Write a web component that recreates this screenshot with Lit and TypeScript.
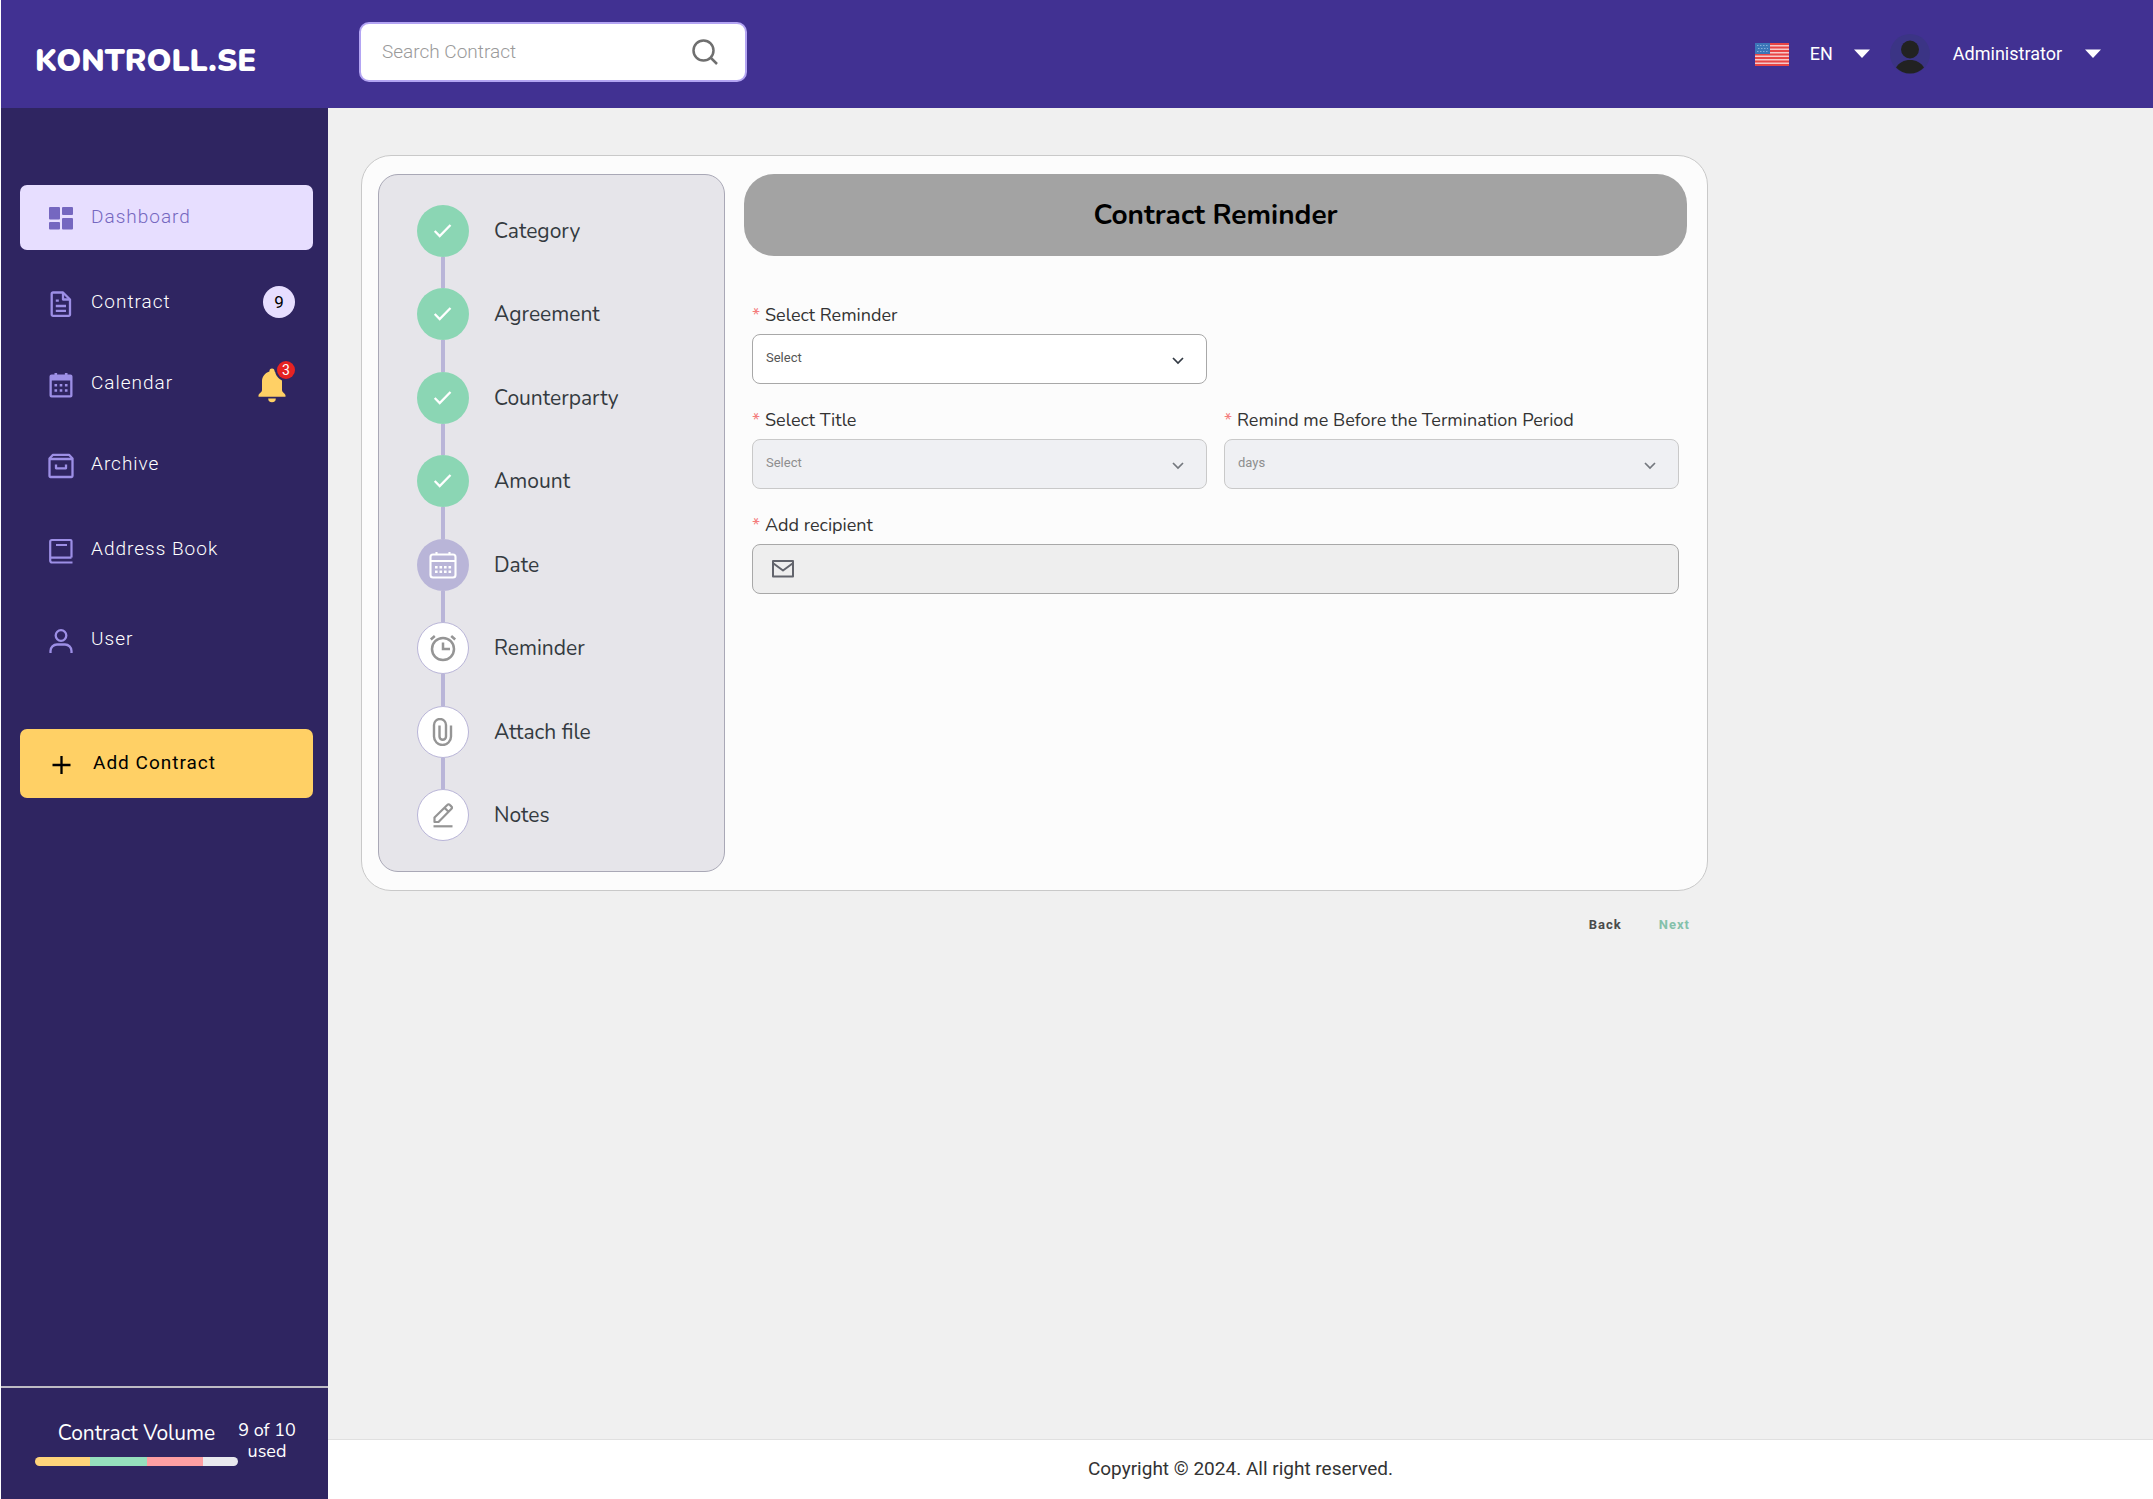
import { LitElement, html, css, svg, nothing, type TemplateResult } from "lit";
import { customElement, property } from "lit/decorators.js";
import { classMap } from "lit/directives/class-map.js";

type Icon = TemplateResult;

const icons: Record<string, Icon> = {
  dashboard: svg`<g fill="currentColor"><rect x="0" y="0" width="11" height="12.500" rx="1"/><rect x="13" y="0" width="11" height="8" rx="1"/><rect x="0" y="15" width="11" height="7.500" rx="1"/><rect x="13" y="11" width="11" height="11.500" rx="1"/></g>`,
  contract: svg`<g fill="none" stroke="currentColor" stroke-width="2.300" stroke-linejoin="round"><path d="M4 0.500H14L21 7.500V22.500a1.300 1.300 0 0 1-1.300 1.300H4a1.300 1.300 0 0 1-1.300-1.300V1.800A1.300 1.300 0 0 1 4 .5Z"/><path d="M14 1v6.500h6.500M6.800 14h10.200M6.800 18.800h10.200M6.800 8.700h3"/></g>`,
  calendar: svg`<g fill="currentColor"><path fill-rule="evenodd" d="M5.500 0h2.600v1.500h7.800V0h2.600v1.500H21.500A2 2 0 0 1 23.500 3.500V22.500A2 2 0 0 1 21.500 24.500H2.500A2 2 0 0 1 .500 22.500V3.500A2 2 0 0 1 2.500 1.500H5.500ZM2.800 7.500V22.300H21.200V7.500Z"/><path d="M5.500 11h2.600v2.600H5.500zM10.700 11h2.600v2.600h-2.600zM15.900 11h2.600v2.600h-2.600zM5.500 16.200h2.600v2.600H5.500zM10.700 16.200h2.600v2.600h-2.600zM15.900 16.200h2.600v2.600h-2.600z"/></g>`,
  archive: svg`<g fill="none" stroke="currentColor" stroke-width="2.300" stroke-linejoin="round"><path d="M.500 4.500 4 .800h16l3.500 3.700V22a1 1 0 0 1-1 1H1.500a1 1 0 0 1-1-1Z"/><path d="M.500 5h23M7 10.500v3.800h10v-3.800"/></g>`,
  book: svg`<g fill="none" stroke="currentColor" stroke-width="2.200"><path d="M22.500 18.500V2a1 1 0 0 0-1-1H3A1.800 1.800 0 0 0 1.200 3V21.500a2 2 0 0 0 2 2H23.500M1.500 18.600H22.500M7 6H18"/></g>`,
  user: svg`<g fill="none" stroke="currentColor" stroke-width="2.300"><circle cx="12" cy="6.500" r="5.300"/><path d="M1.500 24V22a6.500 6.500 0 0 1 6.500-6.500h8a6.500 6.500 0 0 1 6.500 6.500V24"/></g>`,
  plus: svg`<path d="M13.500 4v18M4.500 13h18" fill="none" stroke="currentColor" stroke-width="2.300"/>`,
  check: svg`<path d="m5.700 14 5 5L21.500 8" fill="none" stroke="currentColor" stroke-width="2.300"/>`,
  date: svg`<g fill="none" stroke="currentColor" stroke-width="2.100"><rect x="1.500" y="3.500" width="25" height="23" rx="2.500"/><path d="M1.500 10H26.500M7.500 1v3M20.500 1v3"/></g><path fill="currentColor" d="M6 15h2.600v2.600H6zM10.500 15h2.600v2.600h-2.600zM15 15h2.600v2.600H15zM19.500 15h2.600v2.600h-2.600zM6 19.500h2.600v2.600H6zM10.500 19.500h2.600v2.600h-2.600zM15 19.500h2.600v2.600H15zM19.500 19.500h2.600v2.600h-2.600z"/>`,
  alarm: svg`<g fill="none" stroke="currentColor" stroke-width="2.500"><circle cx="14" cy="15" r="11"/><path d="M14 8.500V15h7"/><path d="m1.800 5.500 4-3.500M26.200 5.500l-4-3.500"/></g>`,
  clip: svg`<path d="M22 7.500V18.500a8.300 8.300 0 0 1-17 0V7a5.600 5.600 0 0 1 12 0V18.500a3.100 3.100 0 0 1-6.500 0V7.500" fill="none" stroke="currentColor" stroke-width="2.400"/>`,
  pen: svg`<g fill="none" stroke="currentColor" stroke-width="2.200" stroke-linejoin="round"><path d="M5.500 21v-4.500L18.500 3.800a1.500 1.500 0 0 1 2.200 0l1.800 1.800a1.500 1.500 0 0 1 0 2.200L9.500 21ZM15.500 6.800l4 4"/><path d="M4.500 25.300H23.500"/></g>`,
};

const drawIcon = (name: string, size: number) =>
  html`<svg class="icon" width=${size} height=${size} viewBox="0 0 ${size} ${size}" aria-hidden="true">${icons[name]}</svg>`;

const caret = html`<svg width="16" height="10" viewBox="0 0 16 10" aria-hidden="true"><path d="M0 .500h16L8 9Z" fill="#fff"/></svg>`;

@customElement("top-bar")
class TopBar extends LitElement {
  static styles = css`
    :host { display: flex; align-items: center; height: 108px; background: #413192; color: #fff; font-family: Roboto, sans-serif; }
    .brand { box-sizing: border-box; width: 327px; flex: none; padding: 14px 0 0 34px; font: 900 31px/40px Nunito, Lato, sans-serif; color: #fff; text-decoration: none; }
    .search { box-sizing: border-box; display: flex; align-items: center; width: 388px; height: 60px; margin: 0 0 5px 31px; padding: 0 27px 0 21px; background: #fff; border: 2px solid #b3a4f3; border-radius: 10px; }
    .search input { flex: 1; min-width: 0; padding: 1px 0 0; border: 0; outline: 0; background: none; font: 300 19px/24px Roboto, sans-serif; color: #333; }
    .search input::placeholder { color: #9a9a9a; opacity: 1; }
    .search button { display: grid; padding: 0; border: 0; background: none; }
    .account { display: flex; align-items: center; gap: 20px; margin: 0 52px 0 auto; }
    .pick { display: flex; align-items: center; gap: 21px; padding: 0; border: 0; background: none; color: #fff; font: 400 18px/24px Roboto, sans-serif; }
    .pick svg { display: block; }
    .profile { gap: 23px; }
  `;
  render() {
    return html`
      <a class="brand" href="#">KONTROLL.SE</a>
      <form class="search" role="search">
        <input type="search" aria-label="Search Contract" placeholder="Search Contract" />
        <button type="button" aria-label="Search">
          <svg width="26" height="26" viewBox="0 0 26 26" fill="none" stroke="#6f6f6f" stroke-width="2.500"><circle cx="11.500" cy="11.500" r="10"/><path d="m19 19 6 6"/></svg>
        </button>
      </form>
      <div class="account">
        <button class="pick" type="button">
          <svg width="34" height="23" viewBox="0 0 34 23" aria-hidden="true">
            <rect width="34" height="23" fill="#f6c9c9"/>
            <path d="M0 1H34M0 4.500H34M0 8H34M0 11.500H34M0 15H34M0 18.500H34M0 22H34" stroke="#e84545" stroke-width="1.900"/>
            <rect width="15" height="11" fill="#3b76b8"/>
            <path d="M2 2.500H14M3 5.500H13M2 8.500H14" stroke="#86add8" stroke-width="1" stroke-dasharray="1.500 1.500"/>
          </svg>
          <span>EN</span>${caret}
        </button>
        <button class="pick profile" type="button">
          <svg width="40" height="40" viewBox="0 0 40 40" aria-hidden="true">
            <circle cx="20" cy="20" r="20" fill="#3b3485"/><circle cx="20" cy="15.500" r="9" fill="#222"/>
            <path d="M6 33.500C9 28.500 14 26 20 26s11 2.500 14 7.500A19.500 19.500 0 0 1 6 33.500Z" fill="#222"/>
          </svg>
          <span>Administrator</span>${caret}
        </button>
      </div>`;
  }
}

interface NavItem { label: string; icon: string; size: number; active?: boolean; space?: "wide" | "wider"; count?: number; alerts?: number; }

const navItems: NavItem[] = [
  { label: "Dashboard", icon: "dashboard", size: 24, active: true },
  { label: "Contract", icon: "contract", size: 24, count: 9, space: "wide" },
  { label: "Calendar", icon: "calendar", size: 24, alerts: 3 },
  { label: "Archive", icon: "archive", size: 24 },
  { label: "Address Book", icon: "book", size: 24, space: "wide" },
  { label: "User", icon: "user", size: 24, space: "wider" },
];

const volume = [
  { color: "#ffd47a", share: 27 },
  { color: "#96e0bd", share: 28 },
  { color: "#ff9fa3", share: 28 },
  { color: "#e9e9ee", share: 17 },
];

@customElement("side-bar")
class SideBar extends LitElement {
  static styles = css`
    :host { display: flex; flex-direction: column; background: #2f2561; font-family: Roboto, sans-serif; }
    nav { display: flex; flex-direction: column; gap: 16px; padding: 77px 15px 0 19px; }
    .item { box-sizing: border-box; display: flex; align-items: center; height: 65px; padding: 0 18px 2px 28px; border-radius: 7px; color: #fff; text-decoration: none; font: 300 19px/24px Roboto, sans-serif; letter-spacing: 1px; }
    .item .icon { width: 26px; flex: none; margin: 4px 17px 0 0; color: #9d8fe6; overflow: visible; }
    .label { flex: 1; }
    .active { background: #e7deff; color: #7567c0; }
    .active .icon { color: #7567c0; }
    .wide { margin-top: 4px; }
    .wider { margin-top: 9px; }
    .count { display: grid; place-items: center; width: 32px; height: 32px; border-radius: 50%; background: #e7deff; color: #000; font: 400 17px/20px Roboto, sans-serif; letter-spacing: 0; }
    .bell { position: relative; width: 37px; height: 44px; letter-spacing: 0; }
    .alerts { position: absolute; top: 0; right: 0; width: 18px; height: 18px; border-radius: 50%; background: #e62323; color: #fff; font: 400 14px/18px Roboto, sans-serif; text-align: center; }
    .bell svg { position: absolute; left: 0; top: 7px; }
    .add { width: 100%; height: 69px; margin-top: 41px; border: 0; background: #ffd065; color: #000; font-weight: 400; text-align: left; }
    .add .icon { color: #000; margin-right: 19px; }
    .volume { display: grid; grid-template-columns: 203px auto; justify-content: start; margin-top: auto; padding: 32px 15px 33px 34px; border-top: 2px solid #bdbbc4; color: #fff; font-family: Nunito, Lato, sans-serif; }
    .volume h2 { margin: 0 0 11px; font: 400 21px/26px Nunito, Lato, sans-serif; text-align: center; }
    .used { margin: 0; width: 58px; font-size: 18px; line-height: 21px; text-align: center; }
    .bar { display: flex; height: 9px; border-radius: 5px; overflow: hidden; }
  `;
  render() {
    return html`
      <nav aria-label="Main">
        ${navItems.map((n) => html`
          <a href="#" class=${classMap({ item: true, active: !!n.active, wide: n.space === "wide", wider: n.space === "wider" })}>
            ${drawIcon(n.icon, n.size)}<span class="label">${n.label}</span>
            ${n.count ? html`<span class="count">${n.count}</span>` : nothing}
            ${n.alerts ? html`<span class="bell">
              <svg width="28" height="35" viewBox="0 0 28 35" aria-hidden="true"><path d="M14 .500c1.800 0 2.600 1.300 2.600 3C21.500 5 24 9 24 13.500V22c0 2.500 3.500 3.500 3.500 5.500v1.300H.500V27.500C.500 25.500 4 24.500 4 22V13.500C4 9 6.500 5 11.400 3.500c0-1.700.8-3 2.600-3ZM10.200 30.500h7.600a3.800 3.800 0 0 1-7.600 0Z" fill="#ffd065"/><circle cx="28" cy="2" r="11" fill="#2f2561"/></svg>
              <span class="alerts">${n.alerts}</span></span>` : nothing}
          </a>`)}
        <button class="item add" type="button">${drawIcon("plus", 26)}<span class="label">Add Contract</span></button>
      </nav>
      <section class="volume">
        <div>
          <h2>Contract Volume</h2>
          <div class="bar">${volume.map((v) => html`<span style="width:${v.share}%;background:${v.color}"></span>`)}</div>
        </div>
        <p class="used">9 of 10 used</p>
      </section>`;
  }
}

type StepState = "done" | "current" | "todo";
const steps: { label: string; icon: string; state: StepState }[] = [
  { label: "Category", icon: "check", state: "done" },
  { label: "Agreement", icon: "check", state: "done" },
  { label: "Counterparty", icon: "check", state: "done" },
  { label: "Amount", icon: "check", state: "done" },
  { label: "Date", icon: "date", state: "current" },
  { label: "Reminder", icon: "alarm", state: "todo" },
  { label: "Attach file", icon: "clip", state: "todo" },
  { label: "Notes", icon: "pen", state: "todo" },
];

@customElement("step-list")
class StepList extends LitElement {
  static styles = css`
    :host { box-sizing: border-box; display: block; padding: 14px 38px; background: #e6e5ea; border: 1px solid #a9a8b6; border-radius: 20px; }
    ol { display: grid; grid-auto-rows: 1fr; min-height: 668px; margin: 0; padding: 0; list-style: none; }
    li { display: flex; align-items: center; gap: 25px; font: 400 21px/28px Nunito, Lato, sans-serif; color: #343a40; }
    .track { align-self: stretch; display: flex; flex-direction: column; align-items: center; }
    .track::before, .track::after { content: ""; flex: 1; width: 4px; background: #b9b5d8; }
    li:first-child .track::before, li:last-child .track::after { background: none; }
    .dot { box-sizing: border-box; display: grid; place-items: center; width: 52px; height: 52px; border-radius: 50%; }
    .done { background: #8bd6b4; color: #fff; }
    .current { background: #b9b5d8; color: #fff; }
    .todo { background: #fff; border: 1px solid #b9b5d8; color: #959595; }
  `;
  render() {
    return html`<ol>${steps.map((s) => html`
      <li><span class="track"><span class="dot ${s.state}">${drawIcon(s.icon, 28)}</span></span><span>${s.label}</span></li>`)}</ol>`;
  }
}

@customElement("select-field")
class SelectField extends LitElement {
  @property() label = "";
  @property() value = "";
  @property({ type: Boolean }) disabled = false;
  static styles = css`
    :host { display: block; min-width: 0; }
    label { display: flex; gap: 6px; margin-bottom: 6px; font: 400 18px/26px Nunito, Lato, sans-serif; color: #333; }
    .star { width: 7px; color: #f47c7c; font-size: 18px; line-height: 26px; }
    .box { display: grid; align-items: center; }
    .box > * { grid-area: 1 / 1; }
    select { box-sizing: border-box; appearance: none; width: 100%; height: 50px; padding: 0 40px 3px 13px; border: 1px solid #a8a8a8; border-radius: 8px; background: #fff; color: #555; opacity: 1; font: 400 13px/16px Roboto, sans-serif; }
    select:disabled { background: #eff0f3; border-color: #c9c9c9; color: #8e8e8e; }
    svg { justify-self: end; margin: 4px 23px 0 0; color: #333a44; pointer-events: none; }
    select:disabled + svg { color: #74787e; }
  `;
  render() {
    return html`
      <label for="control"><span class="star">*</span>${this.label}</label>
      <div class="box">
        <select id="control" ?disabled=${this.disabled}><option>${this.value}</option></select>
        <svg width="12" height="8" viewBox="0 0 12 8" fill="none" stroke="currentColor" stroke-width="1.700" aria-hidden="true"><path d="m1 1 5 5 5-5"/></svg>
      </div>`;
  }
}

@customElement("app-root")
class AppRoot extends LitElement {
  static styles = css`
    :host { box-sizing: border-box; display: grid; grid-template: auto 1fr / 327px minmax(0, 1fr); min-height: 100vh; padding-left: 1px; background: #fff; }
    top-bar { grid-column: 1 / -1; }
    .page { display: flex; flex-direction: column; background: #f0f0f0; }
    main { flex: 1; max-width: 1347px; padding: 47px 33px 40px; }
    .card { display: grid; grid-template-columns: 347px minmax(0, 1fr); gap: 19px; padding: 18px 20px 18px 16px; background: #fcfcfc; border: 1px solid #c9c9c9; border-radius: 30px; }
    h1 { margin: 0 0 46px; padding: 22px; border-radius: 30px; background: #a3a3a3; color: #000; font: 700 28px/38px Nunito, Lato, sans-serif; text-align: center; }
    .fields { display: grid; grid-template-columns: 1fr 1fr; gap: 23px 17px; padding: 0 8px; }
    .first { grid-column: 1; }
    .title { grid-column: 1; }
    .recipient { grid-column: 1 / -1; }
    .recipient label { display: flex; gap: 6px; margin-bottom: 6px; font: 400 18px/26px Nunito, Lato, sans-serif; color: #333; }
    .star { width: 7px; color: #f47c7c; font-size: 18px; line-height: 26px; }
    .mail { box-sizing: border-box; display: flex; align-items: center; gap: 12px; height: 50px; padding: 0 19px; border: 1px solid #a8a8a8; border-radius: 8px; background: #eee; }
    .mail input { flex: 1; min-width: 0; border: 0; outline: 0; background: none; font: 400 16px/20px Roboto, sans-serif; }
    .actions { display: flex; justify-content: flex-end; gap: 37px; padding: 26px 18px 0 0; }
    .actions button { padding: 0; border: 0; background: none; color: #4a4a4a; font: 700 13px/16px Roboto, sans-serif; letter-spacing: 1px; }
    .actions .next { color: #84c1ab; }
    footer { padding: 17px 0 18px; border-top: 1px solid #e0e0e0; background: #fff; color: #333; font: 400 19px/24px Roboto, sans-serif; text-align: center; }
  `;
  render() {
    return html`
      <top-bar></top-bar>
      <side-bar></side-bar>
      <div class="page">
        <main>
          <div class="card">
            <step-list></step-list>
            <form>
              <h1>Contract Reminder</h1>
              <div class="fields">
                <select-field class="first" label="Select Reminder" value="Select"></select-field>
                <select-field class="title" label="Select Title" value="Select" disabled></select-field>
                <select-field label="Remind me Before the Termination Period" value="days" disabled></select-field>
                <div class="recipient">
                  <label for="recipient"><span class="star">*</span>Add recipient</label>
                  <div class="mail">
                    <svg width="22" height="18" viewBox="0 0 22 18" fill="none" stroke="#62646c" stroke-width="2" stroke-linejoin="round" aria-hidden="true"><rect x="1" y="1" width="20" height="15.500"/><path d="m1.500 3.500 9.500 7 9.500-7"/></svg>
                    <input id="recipient" type="email" />
                  </div>
                </div>
              </div>
            </form>
          </div>
          <div class="actions"><button type="button">Back</button><button class="next" type="button">Next</button></div>
        </main>
        <footer>Copyright © 2024. All right reserved.</footer>
      </div>`;
  }
}
